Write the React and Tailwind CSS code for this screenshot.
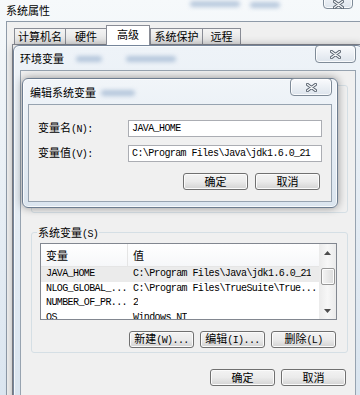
import React from 'react';

const cjk = "font-['Noto_Sans_CJK_SC',sans-serif]";
const mono = "font-['Liberation_Mono',monospace] tracking-[-0.6px]";

// X of the inactive Win7 close button
function XGlyph() {
  return (
    <svg width="11" height="9" viewBox="0 0 11 9">
      <path d="M1.5 1.5 L9.5 7.5 M9.5 1.5 L1.5 7.5" stroke="#56606c" strokeWidth="3.2" strokeLinecap="round" fill="none" />
      <path d="M1.5 1.5 L9.5 7.5 M9.5 1.5 L1.5 7.5" stroke="#f4f6f8" strokeWidth="1.4" strokeLinecap="round" fill="none" />
    </svg>
  );
}

function CloseButton({ className }) {
  return (
    <div className={`absolute flex items-center justify-center rounded-[4px] border border-[#7f8b98] bg-gradient-to-b from-[#fafbfd] to-[#dde4ec] shadow-[inset_0_0_0_1px_rgba(255,255,255,0.8)] ${className}`}>
      <XGlyph />
    </div>
  );
}

// blurred stuff seen through the glass frame
function Blob({ className }) {
  return <span className={`absolute h-[6px] rounded-full bg-[#8fa9c9] opacity-60 blur-[2px] ${className}`} />;
}

function Title({ children }) {
  return <span className={`block text-[11px] leading-[13px] text-black ${cjk}`}>{children}</span>;
}

function Mixed({ zh, en }) {
  return (
    <span className="flex items-baseline whitespace-nowrap leading-[13px] text-black">
      <span className={`${cjk} text-[11px]`}>{zh}</span>
      {en && <span className={`${mono} text-[10px]`}>{en}</span>}
    </span>
  );
}

function Btn({ zh, en }) {
  return (
    <div className="flex h-[17px] w-[65px] items-center justify-center rounded-[3px] border border-[#707070] bg-gradient-to-b from-[#f3f3f3] via-[#ebebeb] to-[#d3d3d3] shadow-[inset_0_0_0_1px_#fbfbfb]">
      <Mixed zh={zh} en={en} />
    </div>
  );
}

function Group({ zh, en, className = '', children }) {
  return (
    <div className={`relative ml-[10px] flex w-[317px] flex-col rounded-[3px] border border-[#d5dfe5] ${className}`}>
      {zh && (
        <span className="absolute left-[5px] top-[-7px] bg-[#f0f0f0] px-[1px]">
          <Mixed zh={zh} en={en} />
        </span>
      )}
      {children}
    </div>
  );
}

const tabs = [
  { label: '计算机名', w: 'w-[52px]' },
  { label: '硬件', w: 'w-[42px]' },
  { label: '高级', w: 'w-[44px]', active: true },
  { label: '系统保护', w: 'w-[53px]' },
  { label: '远程', w: 'w-[39px]' },
];

const sysVars = [
  ['JAVA_HOME', 'C:\\Program Files\\Java\\jdk1.6.0_21'],
  ['NLOG_GLOBAL_...', 'C:\\Program Files\\TrueSuite\\True...'],
  ['NUMBER_OF_PR...', '2'],
  ['OS', 'Windows_NT'],
];

function ListBox({ rows, selected }) {
  return (
    <div className="ml-[8px] mt-[10px] flex h-[77px] w-[297px] overflow-hidden border border-[#828790] bg-white">
      <div className="flex min-w-0 flex-1 flex-col">
        <div className="flex h-[23px] shrink-0 items-center border-b border-[#e5e5e5] bg-gradient-to-b from-white to-[#f6f7f9]">
          <div className="flex h-full w-[87px] items-center border-r border-[#e5e5e5] pl-[5px]">
            <Title>变量</Title>
          </div>
          <div className="pl-[5px]">
            <Title>值</Title>
          </div>
        </div>
        {rows.map(([name, value], i) => (
          <div
            key={name}
            className={`flex h-[14.5px] shrink-0 items-center text-[10px] leading-[12px] text-black ${mono} ${i === selected ? 'bg-[#ebebeb]' : ''}`}
          >
            <div className="w-[87px] overflow-hidden whitespace-nowrap pl-[5px]">{name}</div>
            <div className="overflow-hidden whitespace-nowrap pl-[5px]">{value}</div>
          </div>
        ))}
      </div>
      <div className="flex w-[17px] shrink-0 flex-col items-center bg-gradient-to-r from-[#ebebeb] via-[#f7f7f7] to-[#ebebeb]">
        <div className="flex h-[17px] w-full items-center justify-center">
          <svg width="7" height="4" viewBox="0 0 7 4"><path d="M0 4 L3.5 0 L7 4 Z" fill="#4d4d4d" /></svg>
        </div>
        <div className="mt-[7px] h-[17px] w-[14px] rounded-[2px] border border-[#979797] bg-gradient-to-r from-[#f4f4f4] to-[#dcdcdc] shadow-[inset_0_0_0_1px_#fcfcfc]" />
        <div className="flex-1" />
        <div className="flex h-[17px] w-full items-center justify-center">
          <svg width="7" height="4" viewBox="0 0 7 4"><path d="M0 0 L3.5 4 L7 0 Z" fill="#4d4d4d" /></svg>
        </div>
      </div>
    </div>
  );
}

export default function App() {
  return (
    <div className="relative h-[395px] w-[360px] overflow-hidden bg-[#e6edf4]">
      {/* 系统属性 */}
      <div className="absolute left-0 top-0 flex h-[420px] w-[380px] flex-col bg-gradient-to-b from-[#f6f9fb] to-[#d9e4ef]">
        <div className="relative h-[21px] shrink-0 pl-[6px] pt-[4px]">
          <Title>系统属性</Title>
          <Blob className="left-[190px] top-[1px] w-[50px]" />
          <Blob className="left-[250px] top-[2px] w-[30px]" />
          <CloseButton className="left-[323px] top-[-9px] h-[18px] w-[30px] pt-[8px]" />
        </div>
        <div className="ml-[6px] flex flex-1 flex-col border-l border-t border-[#8e9aa8] bg-[#f0f0f0]">
          <div className="flex h-[22px] shrink-0 items-end pl-[7px]">
            {tabs.map((t) => (
              <div
                key={t.label}
                className={`${t.w} flex items-center justify-center border border-b-0 border-[#898c95] ${
                  t.active
                    ? 'relative z-10 -mb-px h-[20px] bg-white pb-[2px]'
                    : '-mr-px h-[16px] bg-gradient-to-b from-[#f4f4f4] to-[#e0e0e0]'
                }`}
              >
                <Title>{t.label}</Title>
              </div>
            ))}
          </div>
          <div className="ml-[5px] flex-1 border-l border-t border-[#898c95] bg-[#fcfcfc]" />
        </div>
      </div>

      {/* 环境变量 */}
      <div className="absolute left-[13px] top-[45px] flex h-[380px] w-[350px] flex-col rounded-t-[6px] border border-[#75859a] bg-gradient-to-b from-[#eef3f8] to-[#d8e3ee] shadow-[0_0_8px_rgba(0,0,0,0.3),inset_0_0_0_1px_rgba(255,255,255,0.7)]">
        <div className="relative h-[24px] shrink-0 pl-[6px] pt-[6px]">
          <Title>环境变量</Title>
          <Blob className="left-[62px] top-[10px] w-[26px]" />
          <Blob className="left-[112px] top-[10px] w-[50px]" />
          <CloseButton className="left-[301px] top-[-1px] h-[18px] w-[41px]" />
        </div>
        <div className="mx-[6px] flex flex-1 flex-col border border-[#97a3b0] bg-[#f0f0f0]">
          {/* user variables, hidden behind the edit dialog */}
          <Group className="mt-[14px] h-[128px]">
            <div className="ml-[8px] mt-[10px] h-[77px] w-[297px] border border-[#828790] bg-white" />
          </Group>

          <Group zh="系统变量" en="(S)" className="mt-[19px] h-[121px]">
            <ListBox rows={sysVars} selected={0} />
            <div className="mt-[11px] flex justify-end gap-[6px] pr-[11px]">
              <Btn zh="新建" en="(W)..." />
              <Btn zh="编辑" en="(I)..." />
              <Btn zh="删除" en="(L)" />
            </div>
          </Group>

          <div className="mt-[16px] flex justify-end gap-[6px] pr-[9px]">
            <Btn zh="确定" />
            <Btn zh="取消" />
          </div>
        </div>
      </div>

      {/* 编辑系统变量 */}
      <div className="absolute left-[22px] top-[78px] flex h-[130px] w-[316px] flex-col rounded-[6px] border border-[#6d7d90] bg-gradient-to-b from-[#f1f5f9] to-[#dbe5ef] shadow-[0_0_9px_rgba(0,0,0,0.4),inset_0_0_0_1px_rgba(255,255,255,0.75)]">
        <div className="relative h-[25px] shrink-0 pl-[7px] pt-[7px]">
          <Title>编辑系统变量</Title>
          <Blob className="left-[78px] top-[11px] w-[34px]" />
          <CloseButton className="left-[267px] top-[-1px] h-[18px] w-[42px]" />
        </div>
        <div className="mx-[5px] mb-[5px] flex flex-1 flex-col border border-[#97a3b0] bg-[#f0f0f0]">
          <div className="mt-[15px] flex items-center pl-[9px]">
            <div className="w-[90px]"><Mixed zh="变量名" en="(N):" /></div>
            <div className={`flex h-[17px] w-[194px] items-center border border-[#abadb3] bg-white pl-[3px] text-[10px] leading-[12px] text-black ${mono}`}>
              JAVA_HOME
            </div>
          </div>
          <div className="mt-[8px] flex items-center pl-[9px]">
            <div className="w-[90px]"><Mixed zh="变量值" en="(V):" /></div>
            <div className={`flex h-[17px] w-[194px] items-center border border-[#abadb3] bg-white pl-[3px] text-[10px] leading-[12px] text-black ${mono}`}>
              C:\Program Files\Java\jdk1.6.0_21
            </div>
          </div>
          <div className="mt-[11px] flex justify-end gap-[7px] pr-[11px]">
            <Btn zh="确定" />
            <Btn zh="取消" />
          </div>
        </div>
      </div>
    </div>
  );
}
